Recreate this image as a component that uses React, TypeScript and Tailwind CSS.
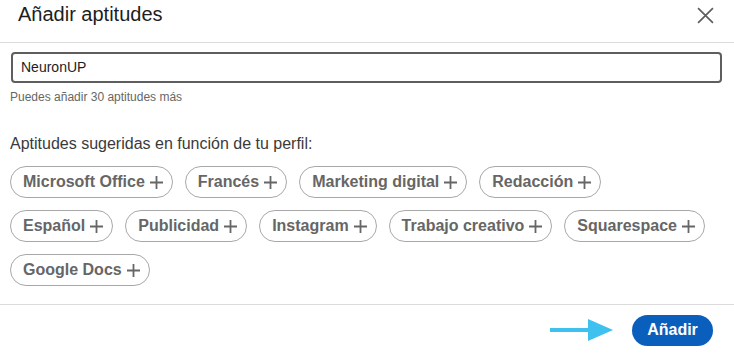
import React from "react";

const skills = [
  "Microsoft Office",
  "Francés",
  "Marketing digital",
  "Redacción",
  "Español",
  "Publicidad",
  "Instagram",
  "Trabajo creativo",
  "Squarespace",
  "Google Docs",
];

export default function App() {
  return (
    <div
      className="w-[734px] h-[355px] bg-white text-[rgba(0,0,0,0.9)] overflow-hidden flex flex-col"
      style={{ fontFamily: '"Liberation Sans", Arial, sans-serif' }}
    >
      <div className="h-[43px] flex items-start justify-between pl-[18px] pr-[20px] border-b border-[#dcdcdc]">
        <h2 className="text-[20px] leading-[26px] pt-[1px] font-normal text-[#1d1d1d]">Añadir aptitudes</h2>
        <button className="mt-[6px] w-[18px] h-[18px] flex items-center justify-center text-[#5e5e5e]">
          <svg width="17" height="17" viewBox="0 0 16 16" fill="none" stroke="currentColor" strokeWidth="1.6">
            <path d="M1 1L15 15M15 1L1 15" />
          </svg>
        </button>
      </div>
      <div className="px-[10px] pt-[9px] flex-1">
        <div className="ml-[1px] w-[711px] h-[31px] border-2 border-[#5e5e5e] rounded-[4px] flex items-center px-[8px] text-[14px] text-[#1d1d1d]">
          NeuronUP
        </div>
        <div className="mt-[7px] text-[12px] leading-[15px] text-[#666666]">Puedes añadir 30 aptitudes más</div>
        <div className="mt-[29px] text-[16px] leading-[20px] text-[#3a3a3a]">Aptitudes sugeridas en función de tu perfil:</div>
        <div className="mt-[12px] flex flex-wrap gap-x-[12px] gap-y-[12px] w-[700px]">
          {skills.map((s) => (
            <div
              key={s}
              className="h-[32px] rounded-full border border-[#a8a8a8] flex items-center pl-[12px] pr-[9px] text-[16px] font-bold text-[#666666]"
            >
              <span>{s}</span>
              <svg className="ml-[5px]" width="13" height="13" viewBox="0 0 13 13" stroke="currentColor" strokeWidth="1.8">
                <path d="M6.5 0V13M0 6.5H13" />
              </svg>
            </div>
          ))}
        </div>
      </div>
      <div className="h-[51px] border-t border-[#dcdcdc] flex items-center justify-end pr-[21px]">
        <svg width="64" height="24" viewBox="0 0 64 24" className="mr-[18px]">
          <rect x="0" y="10" width="40" height="4" fill="#3ec1ef" />
          <polygon points="38,1 63,12 38,23" fill="#3ec1ef" />
        </svg>
        <button className="h-[31px] w-[81px] rounded-full bg-[#0a5fbd] text-white text-[16px] font-bold">Añadir</button>
      </div>
    </div>
  );
}
